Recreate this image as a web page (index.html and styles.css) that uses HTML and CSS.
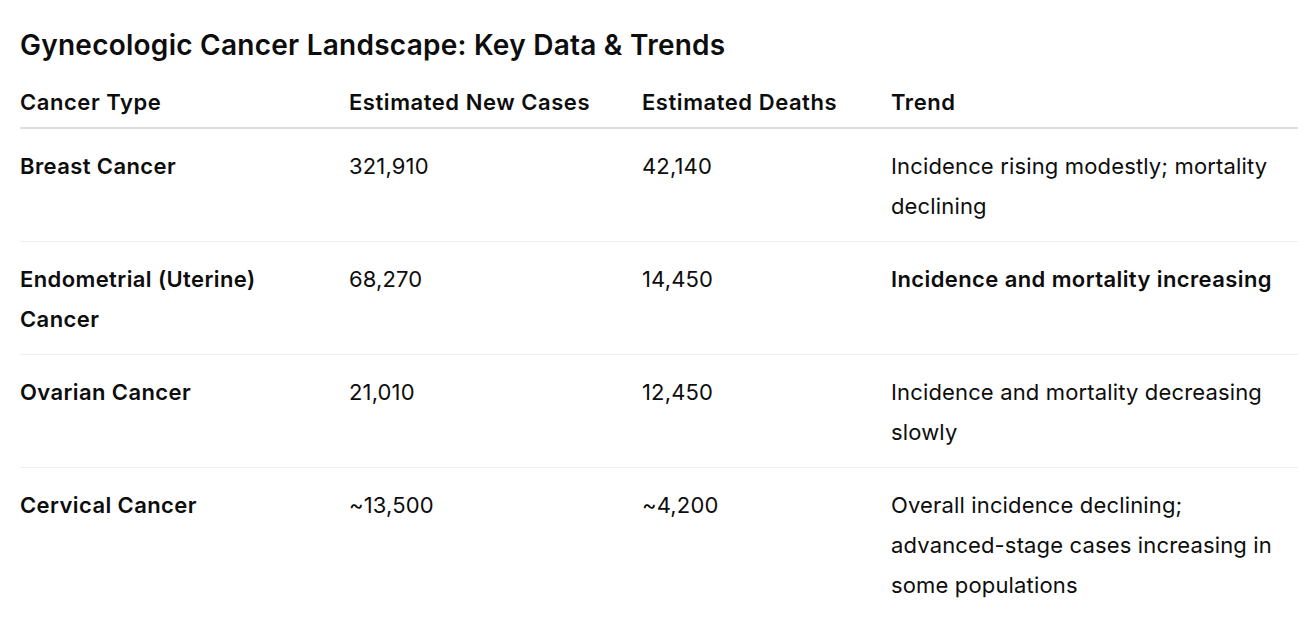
FILE: index.html
```html
<!DOCTYPE html>
<html lang="en">
<head>
<meta charset="utf-8">
<title>Gynecologic Cancer Landscape</title>
<link rel="stylesheet" href="styles.css">
</head>
<body>
<main class="page">
  <h1 class="title">Gynecologic Cancer Landscape: Key Data &amp; Trends</h1>
  <table class="data">
    <colgroup>
      <col class="c1"><col class="c2"><col class="c3"><col class="c4">
    </colgroup>
    <thead>
      <tr>
        <th>Cancer Type</th>
        <th>Estimated New Cases</th>
        <th>Estimated Deaths</th>
        <th>Trend</th>
      </tr>
    </thead>
    <tbody>
      <tr>
        <td class="name">Breast Cancer</td>
        <td>321,910</td>
        <td>42,140</td>
        <td>Incidence rising modestly; mortality declining</td>
      </tr>
      <tr>
        <td class="name">Endometrial (Uterine) Cancer</td>
        <td>68,270</td>
        <td>14,450</td>
        <td class="strong">Incidence and mortality increasing</td>
      </tr>
      <tr>
        <td class="name">Ovarian Cancer</td>
        <td>21,010</td>
        <td>12,450</td>
        <td>Incidence and mortality decreasing slowly</td>
      </tr>
      <tr>
        <td class="name">Cervical Cancer</td>
        <td>~13,500</td>
        <td>~4,200</td>
        <td>Overall incidence declining; advanced-stage cases increasing in some populations</td>
      </tr>
    </tbody>
  </table>
</main>
</body>
</html>
```

FILE: styles.css
```css
html, body {
  margin: 0;
  padding: 0;
  background: #ffffff;
}
body {
  font-family: Inter, "Noto Sans", "Liberation Sans", sans-serif;
  color: #0d0d0d;
}
.page {
  padding: 0 6px 0 20px;
}
.title {
  margin: 0;
  padding-top: 28px;
  font-size: 28px;
  line-height: 34px;
  font-weight: 600;
  letter-spacing: 0.25px;
}
.data {
  width: 1278px;
  border-collapse: collapse;
  table-layout: fixed;
  margin-top: 20px;
  font-size: 22px;
  line-height: 40px;
  letter-spacing: 0.15px;
}
.c1 { width: 329px; }
.c2 { width: 293px; }
.c3 { width: 249px; }
.c4 { width: auto; }
.data th {
  text-align: left;
  font-weight: 600;
  letter-spacing: 0.55px;
  padding: 0 20px 5px 0;
  border-bottom: 2px solid #dedede;
}
.data td {
  vertical-align: top;
  padding: 17px 20px 15px 0;
  border-bottom: 1px solid #efefef;
  font-weight: 400;
}
.data tbody tr:last-child td {
  border-bottom: none;
}
.data td.name,
.data td.strong {
  font-weight: 600;
  letter-spacing: 0.4px;
}
```
